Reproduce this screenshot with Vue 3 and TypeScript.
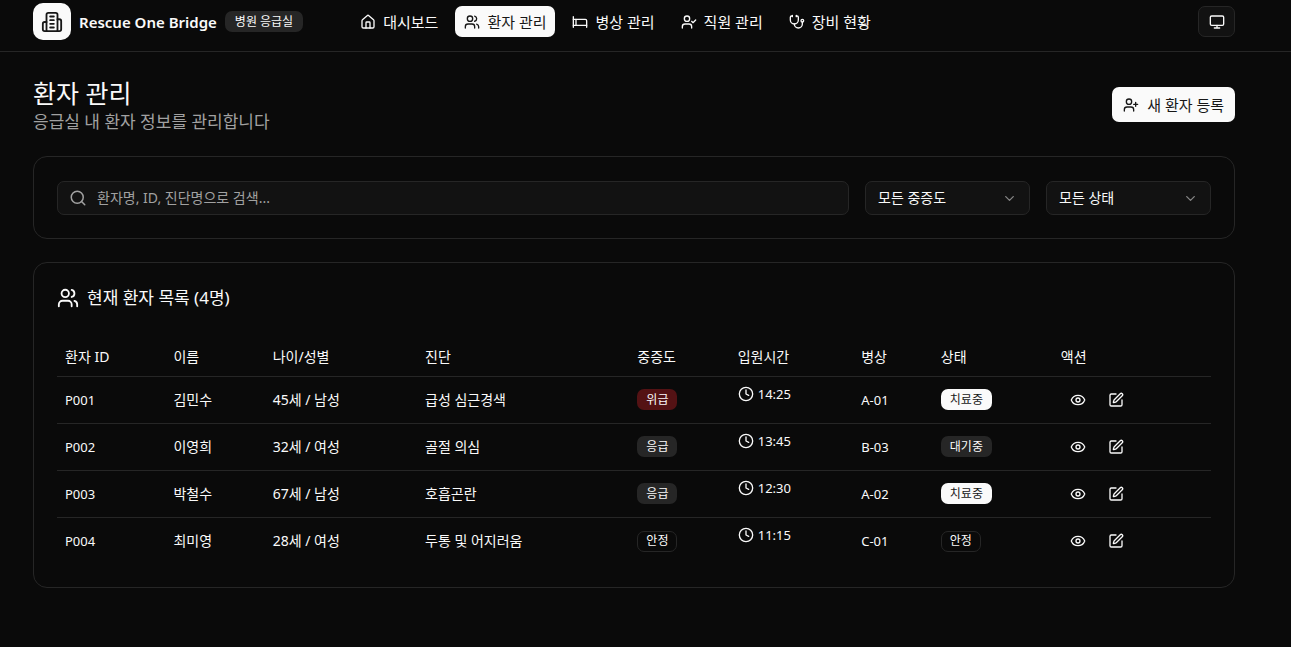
<script setup lang="ts">
import { ref, computed } from 'vue'

type Tone = 'danger' | 'muted' | 'outline' | 'solid'

interface Patient {
  id: string
  name: string
  age: number
  gender: string
  diagnosis: string
  severity: string
  time: string
  bed: string
  status: string
}

const icons: Record<string, string[]> = {
  building: [
    'M6 22V4a2 2 0 0 1 2-2h8a2 2 0 0 1 2 2v18Z',
    'M6 12H4a2 2 0 0 0-2 2v6a2 2 0 0 0 2 2h2',
    'M18 9h2a2 2 0 0 1 2 2v9a2 2 0 0 1-2 2h-2',
    'M10 6h4M10 10h4M10 14h4M10 18h4',
  ],
  house: [
    'M15 21v-8a1 1 0 0 0-1-1h-4a1 1 0 0 0-1 1v8',
    'M3 10a2 2 0 0 1 .709-1.528l7-5.999a2 2 0 0 1 2.582 0l7 5.999A2 2 0 0 1 21 10v9a2 2 0 0 1-2 2H5a2 2 0 0 1-2-2z',
  ],
  users: [
    'M16 21v-2a4 4 0 0 0-4-4H6a4 4 0 0 0-4 4v2',
    'M5 7a4 4 0 1 0 8 0a4 4 0 1 0-8 0',
    'M22 21v-2a4 4 0 0 0-3-3.87',
    'M16 3.13a4 4 0 0 1 0 7.75',
  ],
  bed: ['M2 4v16', 'M2 8h18a2 2 0 0 1 2 2v10', 'M2 17h20', 'M6 8v9'],
  userCheck: [
    'm16 11 2 2 4-4',
    'M16 21v-2a4 4 0 0 0-4-4H6a4 4 0 0 0-4 4v2',
    'M5 7a4 4 0 1 0 8 0a4 4 0 1 0-8 0',
  ],
  userPlus: [
    'M19 8v6M22 11h-6',
    'M16 21v-2a4 4 0 0 0-4-4H6a4 4 0 0 0-4 4v2',
    'M5 7a4 4 0 1 0 8 0a4 4 0 1 0-8 0',
  ],
  stethoscope: [
    'M11 2v2M5 2v2',
    'M5 3H4a2 2 0 0 0-2 2v4a6 6 0 0 0 12 0V5a2 2 0 0 0-2-2h-1',
    'M8 15a6 6 0 0 0 12 0v-3',
    'M18 10a2 2 0 1 0 4 0a2 2 0 1 0-4 0',
  ],
}

const navItems = [
  { label: '대시보드', icon: 'house' },
  { label: '환자 관리', icon: 'users' },
  { label: '병상 관리', icon: 'bed' },
  { label: '직원 관리', icon: 'userCheck' },
  { label: '장비 현황', icon: 'stethoscope' },
]
const activeNav = ref('환자 관리')

const columns = ['환자 ID', '이름', '나이/성별', '진단', '중증도', '입원시간', '병상', '상태', '액션']

const patients: Patient[] = [
  { id: 'P001', name: '김민수', age: 45, gender: '남성', diagnosis: '급성 심근경색', severity: '위급', time: '14:25', bed: 'A-01', status: '치료중' },
  { id: 'P002', name: '이영희', age: 32, gender: '여성', diagnosis: '골절 의심', severity: '응급', time: '13:45', bed: 'B-03', status: '대기중' },
  { id: 'P003', name: '박철수', age: 67, gender: '남성', diagnosis: '호흡곤란', severity: '응급', time: '12:30', bed: 'A-02', status: '치료중' },
  { id: 'P004', name: '최미영', age: 28, gender: '여성', diagnosis: '두통 및 어지러움', severity: '안정', time: '11:15', bed: 'C-01', status: '안정' },
]

const tones: Record<string, Tone> = {
  위급: 'danger',
  응급: 'muted',
  안정: 'outline',
  치료중: 'solid',
  대기중: 'muted',
}

const query = ref('')
const severity = ref('')
const status = ref('')

const visible = computed(() =>
  patients.filter(
    (p) =>
      (p.name + p.id + p.diagnosis).toLowerCase().includes(query.value.toLowerCase()) &&
      (!severity.value || p.severity === severity.value) &&
      (!status.value || p.status === status.value),
  ),
)
</script>

<template>
  <div class="app">
    <header class="topbar">
      <div class="brand">
        <span class="logo">
          <svg class="icon icon-lg" viewBox="0 0 24 24"><path v-for="d in icons.building" :key="d" :d="d" /></svg>
        </span>
        <span class="brand-name">Rescue One Bridge</span>
        <span class="badge muted brand-badge">병원 응급실</span>
      </div>
      <nav class="nav">
        <button
          v-for="item in navItems"
          :key="item.label"
          type="button"
          class="nav-item"
          :class="{ active: item.label === activeNav }"
          @click="activeNav = item.label"
        >
          <svg class="icon" viewBox="0 0 24 24"><path v-for="d in icons[item.icon]" :key="d" :d="d" /></svg>
          {{ item.label }}
        </button>
      </nav>
      <button type="button" class="display-btn" aria-label="화면 모드">
        <svg class="icon" viewBox="0 0 24 24">
          <rect x="2" y="3" width="20" height="14" rx="2" />
          <path d="M8 21h8M12 17v4" />
        </svg>
      </button>
    </header>

    <main class="main">
      <div class="page-head">
        <div>
          <h1>환자 관리</h1>
          <p>응급실 내 환자 정보를 관리합니다</p>
        </div>
        <button type="button" class="primary">
          <svg class="icon" viewBox="0 0 24 24"><path v-for="d in icons.userPlus" :key="d" :d="d" /></svg>
          새 환자 등록
        </button>
      </div>

      <section class="card filters">
        <label class="search">
          <svg class="icon search-icon" viewBox="0 0 24 24"><circle cx="11" cy="11" r="8" /><path d="m21 21-4.3-4.3" /></svg>
          <input v-model="query" type="text" aria-label="환자 검색" placeholder="환자명, ID, 진단명으로 검색..." />
        </label>
        <label class="select">
          <select v-model="severity" aria-label="중증도">
            <option value="">모든 중증도</option>
            <option>위급</option>
            <option>응급</option>
            <option>안정</option>
          </select>
          <svg class="icon chevron" viewBox="0 0 24 24"><path d="m6 9 6 6 6-6" /></svg>
        </label>
        <label class="select">
          <select v-model="status" aria-label="상태">
            <option value="">모든 상태</option>
            <option>치료중</option>
            <option>대기중</option>
            <option>안정</option>
          </select>
          <svg class="icon chevron" viewBox="0 0 24 24"><path d="m6 9 6 6 6-6" /></svg>
        </label>
      </section>

      <section class="card list">
        <h2>
          <svg class="icon icon-lg" viewBox="0 0 24 24"><path v-for="d in icons.users" :key="d" :d="d" /></svg>
          현재 환자 목록 ({{ visible.length }}명)
        </h2>
        <table>
          <colgroup>
            <col v-for="n in 9" :key="n" :class="'col-' + n" />
          </colgroup>
          <thead>
            <tr>
              <th v-for="c in columns" :key="c" scope="col">{{ c }}</th>
            </tr>
          </thead>
          <tbody>
            <tr v-for="p in visible" :key="p.id">
              <td class="latin">{{ p.id }}</td>
              <td>{{ p.name }}</td>
              <td>{{ p.age }}세 / {{ p.gender }}</td>
              <td>{{ p.diagnosis }}</td>
              <td><span class="badge" :class="tones[p.severity]">{{ p.severity }}</span></td>
              <td class="latin time-cell">
                <span class="time">
                  <svg class="icon" viewBox="0 0 24 24"><circle cx="12" cy="12" r="10" /><path d="M12 6v6l4 2" /></svg>
                  {{ p.time }}
                </span>
              </td>
              <td class="latin">{{ p.bed }}</td>
              <td><span class="badge" :class="tones[p.status]">{{ p.status }}</span></td>
              <td>
                <div class="actions">
                  <button type="button" :aria-label="p.name + ' 보기'">
                    <svg class="icon" viewBox="0 0 24 24">
                      <path d="M2.062 12.348a1 1 0 0 1 0-.696 10.75 10.75 0 0 1 19.876 0 1 1 0 0 1 0 .696 10.75 10.75 0 0 1-19.876 0" />
                      <circle cx="12" cy="12" r="3" />
                    </svg>
                  </button>
                  <button type="button" :aria-label="p.name + ' 수정'">
                    <svg class="icon" viewBox="0 0 24 24">
                      <path d="M12 3H5a2 2 0 0 0-2 2v14a2 2 0 0 0 2 2h14a2 2 0 0 0 2-2v-7" />
                      <path d="M18.375 2.625a1 1 0 0 1 3 3l-9.013 9.014a2 2 0 0 1-.853.505l-2.873.84a.5.5 0 0 1-.62-.62l.84-2.873a2 2 0 0 1 .506-.852z" />
                    </svg>
                  </button>
                </div>
              </td>
            </tr>
          </tbody>
        </table>
      </section>
    </main>
  </div>
</template>

<style>
body {
  margin: 0;
  background: #0a0a0a;
}
</style>

<style scoped>
.app {
  min-height: 100vh;
  box-sizing: border-box;
  background: #0a0a0a;
  color: #fafafa;
  font-family: 'Noto Sans', 'Noto Sans CJK KR', sans-serif;
  font-size: 14px;
  line-height: 20px;
}
.app *,
.app *::before {
  box-sizing: border-box;
}
button,
input,
select {
  font: inherit;
  color: inherit;
}
button {
  display: inline-flex;
  align-items: center;
  justify-content: center;
  padding: 0;
  border: 0;
  background: transparent;
  white-space: nowrap;
  cursor: pointer;
}
.icon {
  width: 16px;
  height: 16px;
  flex: none;
  fill: none;
  stroke: currentColor;
  stroke-width: 2;
  stroke-linecap: round;
  stroke-linejoin: round;
}
.icon-lg {
  width: 22px;
  height: 22px;
}
.topbar {
  display: flex;
  align-items: center;
  padding: 3px 56px 11px 33px;
  border-bottom: 1px solid #262626;
}
.brand {
  display: flex;
  align-items: center;
  gap: 8px;
}
.logo {
  display: flex;
  align-items: center;
  justify-content: center;
  width: 38px;
  height: 37px;
  border-radius: 10px;
  background: #fafafa;
  color: #171717;
}
.brand-name {
  font-size: 15px;
  font-weight: 600;
  white-space: nowrap;
}
.nav {
  display: flex;
  gap: 8px;
  margin-left: 48px;
}
.nav-item {
  height: 31px;
  padding: 0 9px;
  gap: 7px;
  border-radius: 7px;
  font-size: 15px;
}
.nav-item.active {
  background: #fafafa;
  color: #171717;
}
.display-btn {
  width: 37px;
  height: 31px;
  margin-left: auto;
  border: 1px solid #262626;
  border-radius: 7px;
  background: #121212;
}
.main {
  padding: 24px 56px 24px 33px;
}
.page-head {
  display: flex;
  align-items: center;
  justify-content: space-between;
  margin-bottom: 23px;
}
h1 {
  margin: 0;
  font-size: 25px;
  font-weight: 400;
  line-height: 34px;
}
p {
  margin: 0;
  color: #a1a1a1;
  font-size: 17px;
  line-height: 23px;
}
.primary {
  height: 35px;
  padding: 0 11px;
  gap: 8px;
  border-radius: 7px;
  background: #fafafa;
  color: #171717;
  font-size: 15px;
}
.card {
  border: 1px solid #262626;
  border-radius: 14px;
}
.filters {
  display: flex;
  gap: 16px;
  padding: 24px 23px 23px;
  margin-bottom: 23px;
}
.search,
.select {
  display: flex;
  align-items: center;
  height: 34px;
  border: 1px solid #262626;
  border-radius: 7px;
  background: #121212;
}
.search {
  flex: 1;
  gap: 10px;
  padding: 0 11px;
}
.search-icon {
  width: 18px;
  height: 18px;
  color: #a1a1a1;
}
.search input {
  flex: 1;
  min-width: 0;
  padding: 0;
  border: 0;
  outline: 0;
  background: transparent;
}
.search input::placeholder {
  color: #a1a1a1;
  opacity: 1;
}
.select {
  width: 165px;
  padding: 0 12px;
}
.select select {
  flex: 1;
  min-width: 0;
  padding: 0;
  border: 0;
  outline: 0;
  appearance: none;
  background: transparent;
}
.chevron {
  width: 15px;
  height: 15px;
  opacity: 0.5;
  pointer-events: none;
}
.list {
  padding: 24px 23px 23px;
}
h2 {
  display: flex;
  align-items: center;
  gap: 8px;
  margin: 0 0 30px;
  font-size: 17px;
  font-weight: 400;
  line-height: 22px;
}
table {
  width: 100%;
  table-layout: fixed;
  border-collapse: collapse;
}
th,
td {
  padding: 0 8px;
  text-align: left;
  font-weight: 400;
  white-space: nowrap;
}
th {
  height: 37px;
}
td {
  height: 47px;
  border-top: 1px solid #262626;
}
.latin {
  font-size: 13px;
}
.time-cell {
  padding-top: 7px;
  vertical-align: top;
}
.time {
  display: flex;
  align-items: center;
  gap: 4px;
}
.col-1 { width: 9.4%; }
.col-2 { width: 8.6%; }
.col-3 { width: 13.2%; }
.col-4 { width: 18.4%; }
.col-5 { width: 8.7%; }
.col-6 { width: 10.7%; }
.col-7 { width: 6.9%; }
.col-8 { width: 10.4%; }
.col-9 { width: 13.7%; }
.badge {
  display: inline-flex;
  align-items: center;
  height: 21px;
  padding: 0 8px;
  border: 1px solid transparent;
  border-radius: 7px;
  font-size: 12px;
  line-height: 16px;
  white-space: nowrap;
  vertical-align: middle;
}
.badge.danger { background: #541214; }
.badge.muted { background: #262626; }
.badge.outline { border-color: #262626; }
.badge.solid { background: #fafafa; color: #171717; }
.badge.brand-badge { padding: 0 9px; }
.actions {
  display: flex;
  gap: 4px;
}
.actions button {
  width: 34px;
  height: 31px;
  border-radius: 7px;
}
</style>
